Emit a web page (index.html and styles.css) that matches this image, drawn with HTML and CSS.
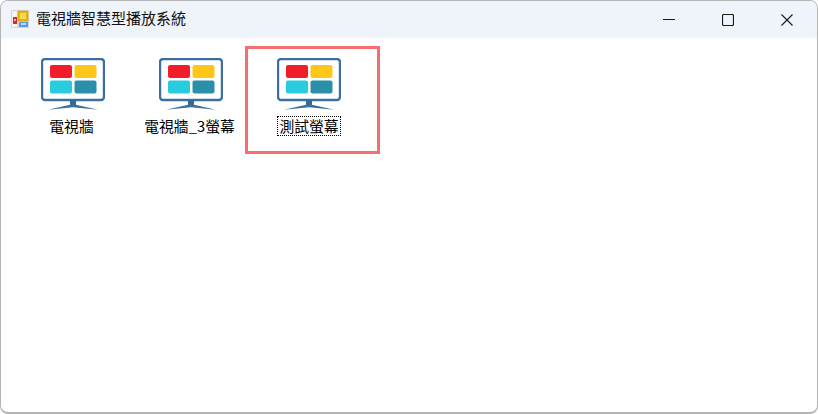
FILE: index.html
```html
<!DOCTYPE html>
<html lang="zh-Hant">
<head>
<meta charset="utf-8">
<title>電視牆智慧型播放系統</title>
<link rel="stylesheet" href="styles.css">
</head>
<body>
<svg class="defs" width="0" height="0" aria-hidden="true">
  <symbol id="tv" viewBox="0 0 64 52">
    <rect x="1" y="1" width="62" height="41" rx="3" fill="#fff" stroke="#3a6f9f" stroke-width="2.4"/>
    <rect x="9" y="7" width="22" height="13" rx="2" fill="#f21d2b"/>
    <rect x="33.500" y="7" width="22" height="13" rx="2" fill="#ffc61a"/>
    <rect x="9" y="22.500" width="22" height="13" rx="2" fill="#29cbdf"/>
    <rect x="33.500" y="22.500" width="22" height="13" rx="2" fill="#2a90aa"/>
    <rect x="29" y="42.500" width="6" height="5" fill="#2f6a99"/>
    <path d="M7 51.800 29 46.800H35L57 51.800 32 49.200Z" fill="#3a6f9f"/>
  </symbol>
</svg>
<div class="window">
  <header class="titlebar">
    <svg class="app-icon" width="18" height="18" viewBox="0 0 18 18" aria-hidden="true">
      <rect width="18" height="18" rx="1" fill="#d5d5d5"/>
      <rect x="1" y="1" width="5" height="16" fill="#f3f3f3"/>
      <rect x="7" y="1" width="10" height="10" fill="#f0b400" stroke="#d09a20" stroke-width=".6"/>
      <rect x="9" y="3" width="6" height="6" fill="#ffd85a"/>
      <rect x="2" y="7" width="4" height="7" fill="#cc2f2a"/>
      <rect x="3" y="9" width="2" height="2" fill="#f2b0a0"/>
      <rect x="8" y="12" width="9" height="5" fill="#5c9be0"/>
      <rect x="10" y="13" width="5" height="2" fill="#bcd8f5"/>
    </svg>
    <span class="title">電視牆智慧型播放系統</span>
    <div class="controls">
      <button class="ctl" aria-label="最小化"><svg width="12" height="12" viewBox="0 0 12 12"><path d="M0 5.500H12" stroke="#1a1a1a" stroke-width="1" fill="none"/></svg></button>
      <button class="ctl" aria-label="最大化"><svg width="12" height="12" viewBox="0 0 12 12"><rect x=".5" y=".5" width="11" height="11" rx="1.500" stroke="#1a1a1a" stroke-width="1.200" fill="none"/></svg></button>
      <button class="ctl" aria-label="關閉"><svg width="12" height="12" viewBox="0 0 12 12"><path d="M.5.500 11.500 11.500M11.500.500 .5 11.500" stroke="#1a1a1a" stroke-width="1.100" fill="none"/></svg></button>
    </div>
  </header>
  <main class="list">
    <div class="item">
      <svg class="tv"><use href="#tv"/></svg>
      <span class="label">電視牆</span>
    </div>
    <div class="item">
      <svg class="tv"><use href="#tv"/></svg>
      <span class="label">電視牆_3螢幕</span>
    </div>
    <div class="item selected">
      <svg class="tv"><use href="#tv"/></svg>
      <span class="label">測試螢幕</span>
    </div>
    <div class="highlight"></div>
  </main>
</div>
</body>
</html>
```
FILE: styles.css
```css
* { box-sizing: border-box; }
html, body { margin: 0; height: 100%; background: #fff; overflow: hidden; }
.defs { position: absolute; }
.window {
  height: 414px;
  border: 1px solid #b4b4b4;
  border-bottom-width: 2px;
  border-radius: 8px;
  overflow: hidden;
  background: #fff;
  font-family: "Noto Sans CJK TC", "Liberation Sans", sans-serif;
  display: flex;
  flex-direction: column;
}
.titlebar {
  height: 37px;
  flex: none;
  background: #eff3fa;
  display: flex;
  align-items: center;
  padding: 0 1px 0 10px;
}
.app-icon { flex: none; margin-top: -1px; }
.title {
  margin: -4px 0 0 7px;
  font-size: 15px;
  font-weight: 400;
  color: #111;
}
.controls { margin-left: auto; display: flex; height: 100%; }
.ctl {
  width: 59px;
  height: 100%;
  border: 0;
  padding: 0;
  background: none;
  display: flex;
  align-items: center;
  justify-content: center;
}
.list {
  position: relative;
  flex: 1;
  display: flex;
  padding: 20px 0 0 13px;
}
.item {
  width: 118px;
  display: flex;
  flex-direction: column;
  align-items: center;
}
.tv { width: 64px; height: 52px; display: block; }
.label {
  margin: 6px 3px 0 0;
  padding: 0 1px;
  font-size: 14.800px;
  line-height: 18px;
  font-weight: 400;
  color: #000;
  white-space: nowrap;
  border: 1px solid transparent;
}
.selected .label { margin-right: 0; border: 1px dotted #000; }
.highlight {
  position: absolute;
  left: 244px;
  top: 8px;
  width: 135px;
  height: 108px;
  border: 3px solid #f47070;
}
```
